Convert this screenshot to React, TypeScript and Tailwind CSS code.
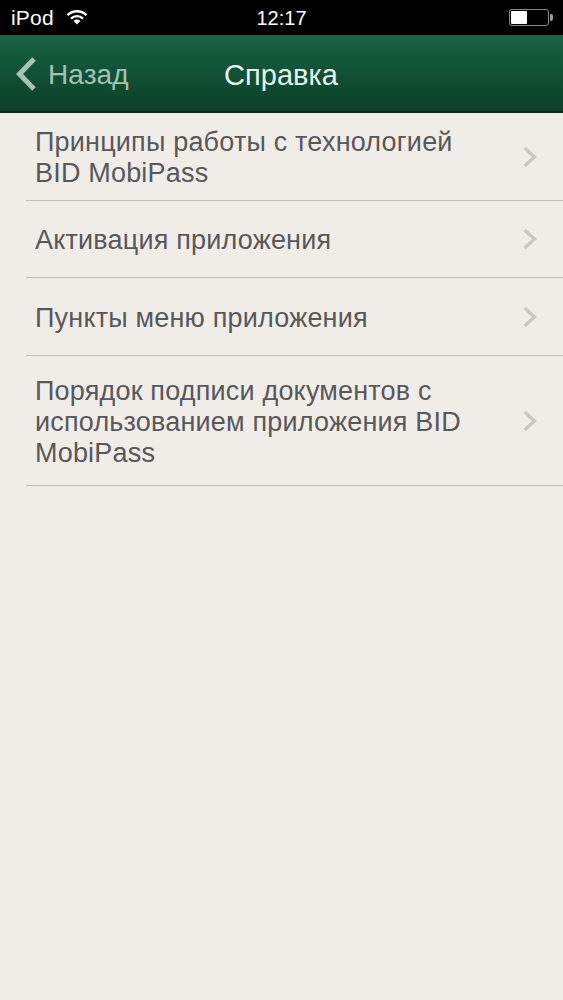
const rows = [
  { lines: ["Принципы работы с технологией", "BID MobiPass"], h: "h-[88px]" },
  { lines: ["Активация приложения"], h: "h-[77px]" },
  { lines: ["Пункты меню приложения"], h: "h-[78px]" },
  {
    lines: ["Порядок подписи документов с", "использованием приложения BID", "MobiPass"],
    h: "h-[130px]",
  },
];

const Wifi = () => (
  <svg width="22" height="16" viewBox="0 0 22 16" className="ml-[12px] -mt-[2px]">
    <path d="M1.5 6.2 A13.5 13.5 0 0 1 20.5 6.2" fill="none" stroke="white" strokeWidth="2.4" />
    <path d="M5 9.6 A8.6 8.6 0 0 1 17 9.6" fill="none" stroke="white" strokeWidth="2.4" />
    <path d="M11 15.5 L7.6 12 A4.8 4.8 0 0 1 14.4 12 Z" fill="white" />
  </svg>
);

const Chevron = () => (
  <svg width="16" height="22" viewBox="0 0 16 22" className="shrink-0">
    <path d="M2.5 2 L12.5 11 L2.5 20" fill="none" stroke="#c9c8c5" strokeWidth="3.4" />
  </svg>
);

export default function App() {
  return (
    <div className="w-[563px] h-[1000px] flex flex-col bg-[#f0ede9] font-['Liberation_Sans',Arial,sans-serif] overflow-hidden">
      <div className="h-[35px] bg-black text-white flex items-center justify-between pl-[11px] pr-[10px] shrink-0">
        <div className="flex items-center w-[130px]">
          <span className="text-[21px] tracking-[0.2px]">iPod</span>
          <Wifi />
        </div>
        <span className="text-[20px] font-medium -ml-[1px]">12:17</span>
        <div className="flex items-center w-[130px] justify-end">
          <div className="w-[40px] h-[17px] border border-[#8a8a8a] rounded-[3px] p-[1px]">
            <div className="w-[16px] h-full bg-white rounded-[1px]" />
          </div>
          <div className="w-[3px] h-[7px] bg-[#9a9a9a] ml-[1px] rounded-r-[2px]" />
        </div>
      </div>
      <div className="h-[78px] shrink-0 relative flex items-center justify-center pt-[5px] bg-gradient-to-b from-[#196343] to-[#0a4029] border-b-2 border-[#0b2a1d]">
        <div className="absolute left-[15px] top-0 h-full flex items-center pt-[1px]">
          <svg width="22" height="36" viewBox="0 0 22 36">
            <path d="M19 3 L4.5 18 L19 33" fill="none" stroke="#a9c4b7" strokeWidth="5" />
          </svg>
          <span className="ml-[11px] text-[28px] tracking-[0.1px] text-[#a3c2b3] pt-[2px]">Назад</span>
        </div>
        <span className="text-[29px] text-[#e6f3ec] -ml-[1px]">Справка</span>
      </div>
      <div className="pl-[26px]">
        {rows.map((row) => (
          <div
            key={row.lines[0]}
            className={`${row.h} flex items-center justify-between border-b border-[#c4bfba] pl-[9px] pr-[25px]`}
          >
            <div className="text-[27px] leading-[31px] tracking-[0.19px] text-[#58585a] pt-[3px]">
              {row.lines.map((line) => (
                <div key={line}>{line}</div>
              ))}
            </div>
            <Chevron />
          </div>
        ))}
      </div>
    </div>
  );
}
